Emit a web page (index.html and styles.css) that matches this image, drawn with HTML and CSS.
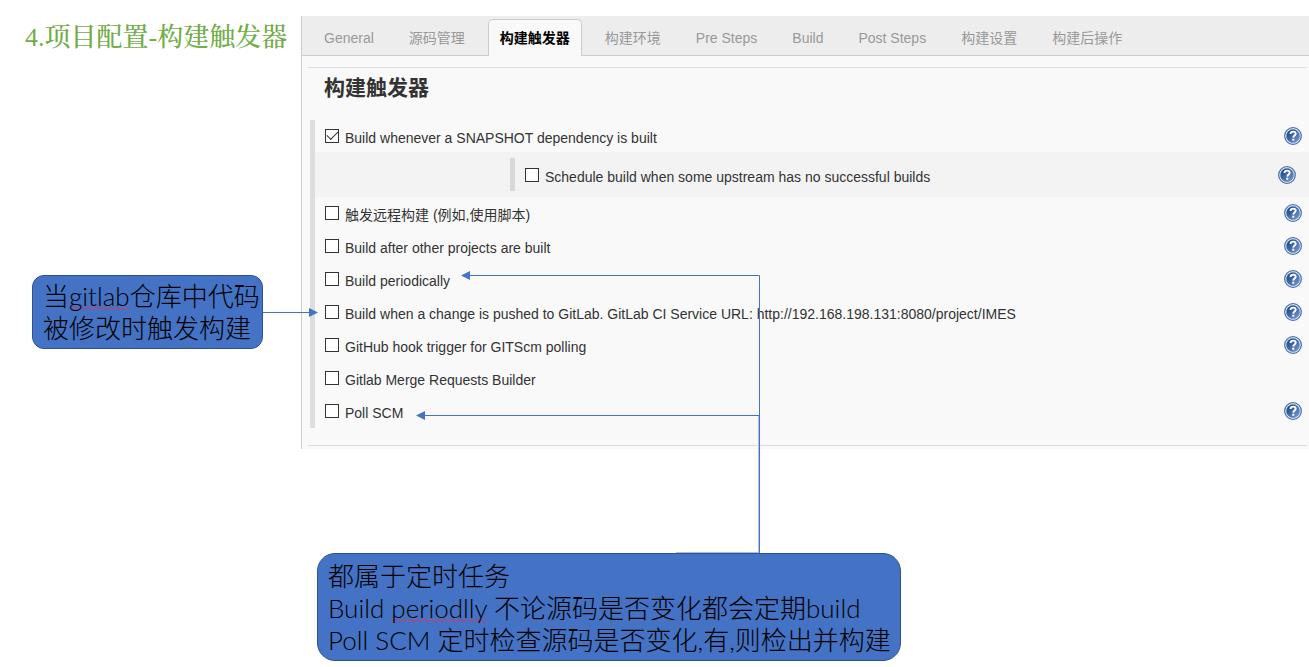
FILE: index.html
```html
<!DOCTYPE html>
<html lang="zh-CN">
<head>
<meta charset="utf-8">
<title>项目配置-构建触发器</title>
<link rel="stylesheet" href="styles.css">
</head>
<body>
<svg class="defs" aria-hidden="true">
  <defs>
    <linearGradient id="blue" x1="0" y1="0" x2="1" y2="1"><stop offset="0.2" stop-color="#1f4d90"/><stop offset="1" stop-color="#7d9fd0"/></linearGradient>
    <symbol id="help" viewBox="0 0 18 18">
      <circle cx="9" cy="9" r="8.3" fill="#fff" stroke="#4a72aa" stroke-width="1.3"/>
      <circle cx="9" cy="9" r="6.7" fill="url(#blue)" stroke="#6b8fc4" stroke-width=".6"/>
      <path d="M6.5 7C6.6 5.3 7.6 4.6 9.1 4.6c1.6 0 2.6.8 2.6 2.1 0 1.7-2.3 1.9-2.4 3.9" fill="none" stroke="#fff" stroke-width="1.9"/>
      <rect x="8.2" y="11.7" width="2.1" height="2" fill="#fff"/>
    </symbol>
  </defs>
</svg>
<main class="slide">
  <aside class="side">
    <h1 class="title">4.项目配置-构建触发器</h1>
    <p class="callout callout-left">当<span class="typo">gitlab</span>仓库中代码<br>被修改时触发构建</p>
  </aside>
  <section class="panel">
    <nav class="tabs">
      <a class="tab" href="#">General</a>
      <a class="tab" href="#">源码管理</a>
      <a class="tab active" href="#" aria-current="page">构建触发器</a>
      <a class="tab" href="#">构建环境</a>
      <a class="tab" href="#">Pre Steps</a>
      <a class="tab" href="#">Build</a>
      <a class="tab" href="#">Post Steps</a>
      <a class="tab" href="#">构建设置</a>
      <a class="tab" href="#">构建后操作</a>
    </nav>
    <div class="section">
      <h2 class="heading">构建触发器</h2>
      <form class="options">
        <div class="row">
          <label class="option"><input class="check" type="checkbox" checked><span class="text">Build whenever a SNAPSHOT dependency is built</span></label>
          <button class="help" type="button" aria-label="Help"><svg class="icon"><use href="#help"/></svg></button>
        </div>
        <div class="row nested">
          <div class="nested-body">
            <label class="option"><input class="check" type="checkbox"><span class="text">Schedule build when some upstream has no successful builds</span></label>
            <button class="help" type="button" aria-label="Help"><svg class="icon"><use href="#help"/></svg></button>
          </div>
        </div>
        <div class="row">
          <label class="option"><input class="check" type="checkbox"><span class="text">触发远程构建 (例如,使用脚本)</span></label>
          <button class="help" type="button" aria-label="Help"><svg class="icon"><use href="#help"/></svg></button>
        </div>
        <div class="row">
          <label class="option"><input class="check" type="checkbox"><span class="text">Build after other projects are built</span></label>
          <button class="help" type="button" aria-label="Help"><svg class="icon"><use href="#help"/></svg></button>
        </div>
        <div class="row">
          <label class="option"><input class="check" type="checkbox"><span class="text">Build periodically</span></label>
          <button class="help" type="button" aria-label="Help"><svg class="icon"><use href="#help"/></svg></button>
        </div>
        <div class="row">
          <label class="option"><input class="check" type="checkbox"><span class="text">Build when a change is pushed to GitLab. GitLab CI Service URL: http://192.168.198.131:8080/project/IMES</span></label>
          <button class="help" type="button" aria-label="Help"><svg class="icon"><use href="#help"/></svg></button>
        </div>
        <div class="row">
          <label class="option"><input class="check" type="checkbox"><span class="text">GitHub hook trigger for GITScm polling</span></label>
          <button class="help" type="button" aria-label="Help"><svg class="icon"><use href="#help"/></svg></button>
        </div>
        <div class="row">
          <label class="option"><input class="check" type="checkbox"><span class="text">Gitlab Merge Requests Builder</span></label>
        </div>
        <div class="row">
          <label class="option"><input class="check" type="checkbox"><span class="text">Poll SCM</span></label>
          <button class="help" type="button" aria-label="Help"><svg class="icon"><use href="#help"/></svg></button>
        </div>
      </form>
    </div>
  </section>
  <p class="callout callout-bottom">都属于定时任务<br>Build <span class="typo">periodlly</span> 不论源码是否变化都会定期build<br>Poll SCM 定时检查源码是否变化,有,则检出并构建</p>
  <svg class="arrows" width="920" height="560" viewBox="0 0 920 560" aria-hidden="true">
    <g fill="none" stroke="#4472c4" stroke-width="1">
      <path d="M758.5 416V553M676 552.5H759" stroke="#a9bfe4"/>
      <path d="M263 312.5H311"/>
      <path d="M469 275.5H759.5V553"/>
      <path d="M424 415.5H759"/>
    </g>
    <g fill="#4472c4">
      <path d="M318 312.5L309 308V317Z"/>
      <path d="M461 275.5L470 271V280Z"/>
      <path d="M416 415.5L425 411V420Z"/>
    </g>
  </svg>
</main>
</body>
</html>
```

FILE: styles.css
```css
* {
  box-sizing: border-box;
}

body {
  margin: 0;
  background: #fff;
  color: #333;
  font: 14px/20px "Liberation Sans", "Noto Sans CJK SC", sans-serif;
}

.defs {
  position: absolute;
  width: 0;
  height: 0;
}

.slide {
  position: relative;
  display: grid;
  grid-template-columns: 301px 1fr;
  padding: 16px 0 6px;
}

.side {
  display: flex;
  flex-direction: column;
  align-items: flex-start;
}

.title {
  margin: 4px 0 0 25px;
  color: #70ad47;
  font: 500 26px/36px "Liberation Serif", "Noto Serif CJK SC", "Noto Sans CJK SC", serif;
  white-space: nowrap;
}

.callout {
  margin: 0;
  background: #4472c4;
  border: 1px solid #2f528f;
  color: #000;
  font: 300 26px/32px Lato, "Noto Sans CJK SC", sans-serif;
  white-space: nowrap;
}

.callout-left {
  width: 231px;
  margin: 219px 0 0 32px;
  padding: 4px 0 4px 10px;
  border-radius: 12px;
}

.callout-bottom {
  grid-column: 1 / -1;
  justify-self: start;
  width: 584px;
  margin: 104px 0 0 317px;
  padding: 6px 10px 4px;
  border-radius: 18px;
}

.typo {
  text-decoration: underline wavy #e8304a 1px;
  text-decoration-skip-ink: none;
  text-underline-offset: 0;
}

.panel {
  min-width: 0;
  background: #f9f9f9;
  border-left: 1px solid #ccc;
}

.tabs {
  display: flex;
  gap: 11px;
  height: 40px;
  padding: 3px 0 0 10px;
  background: #ededed;
  border-bottom: 1px solid #ccc;
}

.tab {
  height: 37px;
  padding: 0 11px;
  border: 1px solid transparent;
  border-bottom: 0;
  border-radius: 5px 5px 0 0;
  color: #999;
  line-height: 36px;
  text-decoration: none;
  white-space: nowrap;
}

.active {
  background: #f9f9f9;
  border-color: #ccc;
  color: #000;
  font-weight: 700;
}

.section {
  margin: 11px 2px 3px 6px;
  padding-bottom: 17px;
  border: solid #ddd;
  border-width: 1px 0;
}

.heading {
  margin: 0;
  padding: 4px 0 16px 16px;
  font-size: 21px;
  line-height: 32px;
}

.options {
  margin: 0 0 0 2px;
  border-left: 5px solid #ddd;
}

.row {
  display: flex;
  align-items: center;
  justify-content: space-between;
  min-height: 33px;
  padding: 0 5px 1px 10px;
}

.row:first-child {
  min-height: 32px;
}

.nested {
  margin-right: -2px;
  padding: 6px 13px 6px 195px;
  background: #f3f3f3;
}

.nested-body {
  display: flex;
  flex: 1;
  align-items: center;
  justify-content: space-between;
  min-height: 33px;
  padding-left: 10px;
  border-left: 5px solid #d9d9d9;
}

.option {
  display: flex;
  align-items: center;
  gap: 6px;
}

.check {
  display: grid;
  place-items: center;
  width: 14px;
  height: 14px;
  margin: 0;
  appearance: none;
  background: #fff;
  border: 1px solid #333;
}

.check:checked::before {
  content: "";
  width: 10px;
  height: 5px;
  margin-bottom: 3px;
  border: solid #333;
  border-width: 0 0 1px 1px;
  transform: rotate(-45deg);
}

.text {
  padding-top: 4px;
}

.help {
  width: 18px;
  height: 18px;
  padding: 0;
  background: none;
  border: 0;
}

.icon {
  display: block;
  width: 18px;
  height: 18px;
}

.arrows {
  position: absolute;
  top: 0;
  left: 0;
  pointer-events: none;
}
```
